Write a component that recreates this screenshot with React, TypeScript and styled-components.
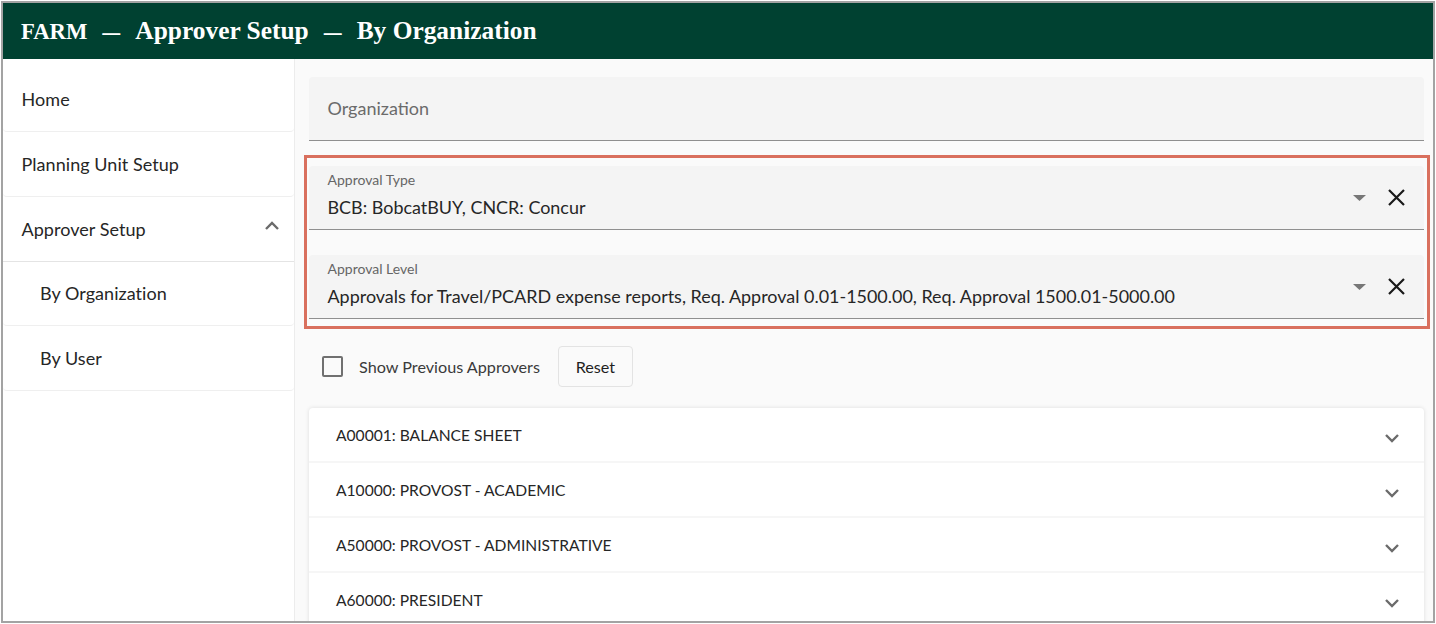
import React from "react";
import styled, { createGlobalStyle } from "styled-components";

const Global = createGlobalStyle`
  html, body { margin: 0; padding: 0; background: #fff; }
  #root { width: 1436px; height: 624px; overflow: hidden; }
  * { box-sizing: border-box; }
`;

const Frame = styled.div`
  width: 1434px;
  height: 622px;
  margin: 1px 0 0 1px;
  border: 2px solid #a3a3a3;
  display: flex;
  flex-direction: column;
  overflow: hidden;
  font-family: Lato, "Liberation Sans", sans-serif;
  color: #262626;
`;

const Header = styled.header`
  flex: none;
  height: 56px;
  background: #004131;
  color: #fff;
  display: flex;
  align-items: baseline;
  padding: 0 0 0 18px;
  font-family: "Liberation Serif", serif;
  font-weight: 700;
  font-size: 25.4px;
  line-height: 54px;
  white-space: pre;
`;

const Brand = styled.span`
  font-size: 22.7px;
`;

const Dash = styled.span`
  margin: 0 15px;
  font-family: "Liberation Sans", sans-serif;
  font-size: 18px;
`;

const Body = styled.div`
  flex: 1;
  min-height: 0;
  display: flex;
`;

const Sidebar = styled.nav`
  flex: none;
  width: 292px;
  padding-top: 8.5px;
  background: #fff;
  border-right: 1px solid #ececec;
`;

const NavItem = styled.div<{ $indent?: boolean; $square?: boolean }>`
  height: 64.7px;
  display: flex;
  align-items: center;
  justify-content: space-between;
  padding: 0 15px 0 ${(p) => (p.$indent ? "37px" : "18.5px")};
  font-size: 18px;
  letter-spacing: 0.05px;
  border-bottom: ${(p) => (p.$square ? "1px solid #e4e4e4" : "1px solid #efefef")};
  border-radius: ${(p) => (p.$square ? "0" : "0 0 4px 4px")};
`;

const Main = styled.main`
  flex: 1;
  min-width: 0;
  background: #fafafa;
  padding: 18px 9px 0 14px;
`;

const Field = styled.div`
  height: 64px;
  background: #f4f4f4;
  border-bottom: 1px solid #8f8f8f;
  border-radius: 4px 4px 0 0;
  padding: 0 19px 0 18.5px;
  display: flex;
  align-items: center;
  justify-content: space-between;
`;

const Placeholder = styled.span`
  font-size: 18px;
  color: #6b6b6b;
  padding-bottom: 2px;
`;

const FieldText = styled.div`
  display: flex;
  flex-direction: column;
  gap: 9px;
  padding-bottom: 6px;
`;

const FieldLabel = styled.span`
  font-size: 14px;
  line-height: 16px;
  color: #666;
`;

const FieldValue = styled.span`
  font-size: 17.96px;
  line-height: 20px;
  color: #262626;
`;

const FieldActions = styled.div`
  display: flex;
  align-items: center;
  gap: 22px;
`;

const Highlight = styled.section`
  margin: 14px -6px 0 -5px;
  border: 3px solid #d9705e;
  padding: 8px 3px 7px 2px;
  display: flex;
  flex-direction: column;
  gap: 25px;
  height: 174px;
`;

const Controls = styled.div`
  display: flex;
  align-items: center;
  height: 41px;
  margin-top: 17px;
  padding-left: 13px;
`;

const Box = styled.span`
  width: 21px;
  height: 21px;
  border: 2px solid #707070;
  border-radius: 2px;
  margin-right: 16px;
`;

const CheckLabel = styled.span`
  font-size: 16.2px;
  color: #3a3a3a;
  margin-right: 18px;
`;

const ResetButton = styled.button`
  width: 75px;
  height: 41px;
  background: #fafafa;
  border: 1px solid #e3e3e3;
  border-radius: 4px;
  font-family: inherit;
  font-size: 16.2px;
  color: #1f1f1f;
  padding: 0;
`;

const Card = styled.div`
  margin-top: 21px;
  background: #fff;
  border-radius: 4px 4px 0 0;
  box-shadow: 0 0 4px rgba(0, 0, 0, 0.12);
`;

const Row = styled.div`
  height: 55px;
  display: flex;
  align-items: center;
  justify-content: space-between;
  padding: 0 25px 0 27px;
  font-size: 15.6px;
  color: #262626;
  border-bottom: 2px solid #f6f6f6;
`;

const RowChevron = styled.span`
  display: flex;
  margin-top: 8px;
`;

const UpChevron = styled.span`
  display: flex;
  margin-bottom: 7px;
`;

const Chevron = ({ up }: { up?: boolean }) => (
  <svg width="14" height="9" viewBox="0 0 14 9" fill="none">
    <path d={up ? "M1 8 L7 2 L13 8" : "M1 1 L7 7 L13 1"} stroke="#6b6b6b" strokeWidth="2.4" />
  </svg>
);

const Caret = () => (
  <svg width="13" height="6" viewBox="0 0 13 6">
    <path d="M0 0 H13 L6.5 6 Z" fill="#777" />
  </svg>
);

const Close = () => (
  <svg width="17" height="17" viewBox="0 0 17 17" fill="none">
    <path d="M1 1 L16 16 M16 1 L1 16" stroke="#1a1a1a" strokeWidth="2.2" />
  </svg>
);

const rows = [
  "A00001: BALANCE SHEET",
  "A10000: PROVOST - ACADEMIC",
  "A50000: PROVOST - ADMINISTRATIVE",
  "A60000: PRESIDENT",
];

export default function App() {
  return (
    <Frame>
      <Global />
      <Header>
        <Brand>FARM</Brand>
        <Dash>—</Dash>Approver Setup<Dash>—</Dash>By Organization
      </Header>
      <Body>
        <Sidebar>
          <NavItem>Home</NavItem>
          <NavItem>Planning Unit Setup</NavItem>
          <NavItem $square>
            Approver Setup
            <UpChevron>
              <Chevron up />
            </UpChevron>
          </NavItem>
          <NavItem $indent>By Organization</NavItem>
          <NavItem $indent>By User</NavItem>
        </Sidebar>
        <Main>
          <Field>
            <Placeholder>Organization</Placeholder>
          </Field>
          <Highlight>
            <Field>
              <FieldText>
                <FieldLabel>Approval Type</FieldLabel>
                <FieldValue>BCB: BobcatBUY, CNCR: Concur</FieldValue>
              </FieldText>
              <FieldActions>
                <Caret />
                <Close />
              </FieldActions>
            </Field>
            <Field>
              <FieldText>
                <FieldLabel>Approval Level</FieldLabel>
                <FieldValue>
                  Approvals for Travel/PCARD expense reports, Req. Approval 0.01-1500.00, Req. Approval 1500.01-5000.00
                </FieldValue>
              </FieldText>
              <FieldActions>
                <Caret />
                <Close />
              </FieldActions>
            </Field>
          </Highlight>
          <Controls>
            <Box />
            <CheckLabel>Show Previous Approvers</CheckLabel>
            <ResetButton>Reset</ResetButton>
          </Controls>
          <Card>
            {rows.map((r) => (
              <Row key={r}>
                <span>{r}</span>
                <RowChevron>
                  <Chevron />
                </RowChevron>
              </Row>
            ))}
          </Card>
        </Main>
      </Body>
    </Frame>
  );
}
